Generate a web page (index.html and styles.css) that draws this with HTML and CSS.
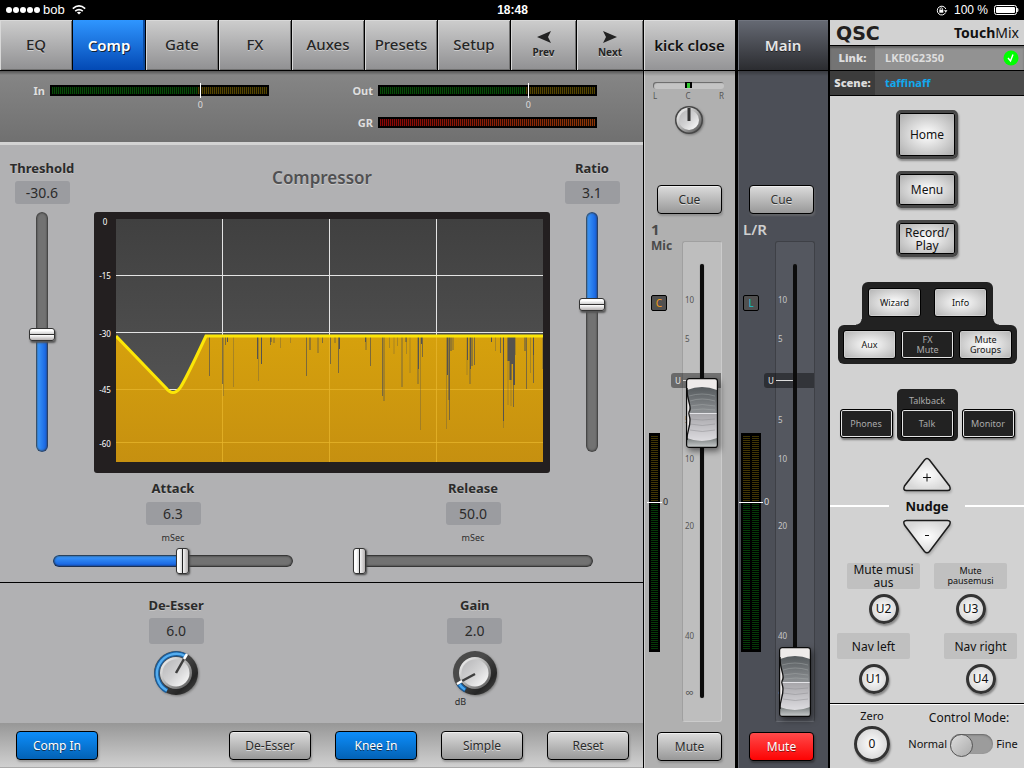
FILE: index.html
```html
<!DOCTYPE html>
<html lang="en">
<head>
<meta charset="utf-8">
<meta name="viewport" content="width=device-width, initial-scale=1">
<title>TouchMix Control</title>
<link rel="stylesheet" href="styles.css">
</head>
<body>
<svg class="defs" width="0" height="0" aria-hidden="true">
  <defs>
    <linearGradient id="metal" x1="0" y1="0" x2="1" y2="1"><stop offset="0" stop-color="#b5b5b7"/><stop offset=".5" stop-color="#d2d2d3"/><stop offset="1" stop-color="#fff"/></linearGradient>
    <linearGradient id="rim" x1="0" y1="0" x2="1" y2="1"><stop offset="0" stop-color="#fff"/><stop offset=".5" stop-color="#b0b0b0"/><stop offset="1" stop-color="#4a4a4a"/></linearGradient>
    <linearGradient id="ring" x1="0" y1="0" x2="1" y2="1"><stop offset=".4" stop-color="#4a4a4a"/><stop offset=".75" stop-color="#262626"/><stop offset="1" stop-color="#505050"/></linearGradient>
    <linearGradient id="plot" x1="0" y1="0" x2="0" y2="1"><stop offset="0" stop-color="#404040"/><stop offset="1" stop-color="#5a5a5a"/></linearGradient>
    <linearGradient id="amber" x1="0" y1="0" x2="0" y2="1"><stop offset="0" stop-color="#d6a10d"/><stop offset="1" stop-color="#c69010"/></linearGradient>
    <linearGradient id="capTop" x1="0" y1="0" x2="0" y2="1"><stop offset="0" stop-color="#555a5d"/><stop offset="1" stop-color="#8d9093"/></linearGradient>
    <linearGradient id="capLow" x1="0" y1="0" x2="0" y2="1"><stop offset="0" stop-color="#a5a4a8"/><stop offset="1" stop-color="#dddce0"/></linearGradient>
    <linearGradient id="capEnd" x1="0" y1="0" x2="0" y2="1"><stop offset="0" stop-color="#777c7d"/><stop offset="1" stop-color="#c6caca"/></linearGradient>
    <radialGradient id="tri"><stop offset="0" stop-color="#fff"/><stop offset="1" stop-color="#d8d8d8"/></radialGradient>
    <symbol id="cap" viewBox="0 0 32 70">
      <rect x=".5" y=".5" width="31" height="69" rx="2.5" fill="#eeebea"/>
      <path d="M1 12Q16 6 31 12V35H3Q5 30 3 25 1 20 1 12Z" fill="url(#capTop)"/>
      <path d="M3 35H31V60Q16 66 2 60V50Q5 41 3 35Z" fill="url(#capLow)"/>
      <path d="M1 60Q16 66 31 60V67Q31 69 29 69H3Q1 69 1 67Z" fill="url(#capEnd)"/>
      <path d="M3 18Q16 14 29 18M4 23Q16 19 29 23M4 28Q16 25 29 28M5 32Q17 30 29 32" fill="none" stroke="#aeb1b3" stroke-width=".7" opacity=".6"/>
      <path d="M4 41Q16 43 29 41M4 46Q16 49 29 46M4 52Q16 55 29 52" fill="none" stroke="#8d8c90" stroke-width=".7" opacity=".7"/>
      <path d="M3 35.500H31" stroke="#e4e4e8" stroke-width="1"/>
      <path d="M1 10C.5 24 7 29 3 34 2 36 4 38 4 42 4 51 1 52 1 62" fill="none" stroke="#111" stroke-width="1.3"/>
      <rect x=".6" y=".6" width="30.8" height="68.8" rx="2.5" fill="none" stroke="#0a0a0a" stroke-width="1.2"/>
    </symbol>
  </defs>
</svg>

<header class="status">
  <div class="status-left">
    <svg width="35" height="8" viewBox="0 0 35 8" fill="#fff" aria-hidden="true"><circle cx="3" cy="4" r="3"/><circle cx="10" cy="4" r="3"/><circle cx="17" cy="4" r="3"/><circle cx="24" cy="4" r="3"/><circle cx="31" cy="4" r="3"/></svg>
    <span>bob</span>
    <svg class="wifi" width="14" height="10" viewBox="0 0 14 10" fill="none" stroke="#fff" stroke-width="1.6" aria-hidden="true"><path d="M.8 3.6Q7-1.8 13.2 3.6M3.2 6.2Q7 3 10.8 6.2"/><path d="M7 9.6 4.9 7.6Q7 6 9.1 7.6Z" fill="#fff" stroke="none"/></svg>
  </div>
  <time class="clock">18:48</time>
  <div class="status-right">
    <svg width="12" height="11" viewBox="0 0 12 11" aria-hidden="true"><path d="M9.6 7.6A4.4 4.4 0 1 1 9.8 4" fill="none" stroke="#fff" stroke-width="1"/><path d="M7.9 5.2h3.6L9.8 7.4Z" fill="#fff"/><rect x="3.3" y="4.7" width="4" height="3" fill="#fff"/><path d="M4.1 4.8V4a1.2 1.2 0 0 1 2.4 0v.8" fill="none" stroke="#fff" stroke-width=".8"/></svg>
    <span>100 %</span>
    <svg width="25" height="10" viewBox="0 0 25 10" aria-hidden="true"><rect x=".5" y=".5" width="22" height="9" rx="2" fill="none" stroke="#fff"/><rect x="2" y="2" width="19" height="6" rx="1" fill="#fff"/><path d="M23.5 3Q25 5 23.5 7Z" fill="#fff" stroke="#fff" stroke-width=".6"/></svg>
  </div>
</header>

<div class="console">
  <main class="panel">
    <nav class="tabs">
      <button>EQ</button><button class="on" aria-current="page">Comp</button><button>Gate</button><button>FX</button><button>Auxes</button><button>Presets</button><button>Setup</button>
      <button class="step"><svg width="14" height="12" viewBox="0 0 14 12" aria-hidden="true"><path d="M14 0 0 6l14 6-3-6Z" fill="#222"/></svg>Prev</button>
      <button class="step"><svg width="14" height="12" viewBox="0 0 14 12" aria-hidden="true"><path d="M0 0 14 6 0 12 3 6Z" fill="#222"/></svg>Next</button>
    </nav>

    <section class="meters">
      <span class="meter-name">In</span>
      <div class="meter level"><i class="zero"></i><span class="zero-label">0</span></div>
      <span class="meter-name">Out</span>
      <div class="meter level"><i class="zero"></i><span class="zero-label">0</span></div>
      <span class="meter-name gr-name">GR</span>
      <div class="meter gr"></div>
    </section>

    <section class="dynamics">
      <div class="side-control">
        <label for="threshold">Threshold</label>
        <output class="value">-30.6</output>
        <input id="threshold" class="vslider low" type="range" min="0" max="100" value="49" style="--fill:49%">
      </div>
      <div class="graph">
        <h1>Compressor</h1>
        <div class="screen">
          <div class="axis"><span style="top:1%">0</span><span style="top:23%">-15</span><span style="top:47%">-30</span><span style="top:70%">-45</span><span style="top:92%">-60</span></div>
          <svg class="plot" viewBox="0 0 427 243" preserveAspectRatio="none" role="img" aria-label="Level history">
            <rect width="427" height="243" fill="url(#plot)"/>
            <path d="M0 56.5H427M0 113.5H427M0 170.5H427M106.500 0V243M213.500 0V243M320.500 0V243" stroke="#e4e4e4" fill="none"/>
            <path d="M0 117 51 170Q57 178 63 170 70 160 90 117H427V243H0Z" fill="url(#amber)"/>
            <path d="M0 170.500H51M63 170.500H427M0 223.500H427M106.500 118V243M213.500 118V243M320.500 118V243" stroke="#e7b52c" fill="none" opacity=".75"/>
            <g fill="none" stroke="#56534e">
              <path opacity=".35" d="M107.500 118V177M117.500 118V168M142.500 118V162M164.500 118V129M174.500 118V124M273.500 118V129M278 118V135M281.500 118V127M290.500 118V135M294 118V154M304.500 118V211M330.500 118V210M351 118V156M387.500 118V209M392 118V186M395 118V187M414.500 118V154M426.500 118V150M379.500 118V132"/>
              <path opacity=".7" d="M93.500 118V157M106.500 118V165M109.500 118V126M154.500 118V126M158 118V124M190.500 118V157M202 118V134M206.500 118V124M214.500 118V145M219 118V124M222.500 118V154M250 118V131M254.500 118V147M266.500 118V177M268 118V182M286 118V168M302 118V165M306.500 118V138M337 118V131M358.500 118V146M354 118V165M384.500 118V134M399 118V136M397.500 118V188M410.500 118V170M417.500 118V164M333.500 118V201"/>
              <path d="M111.500 118V123M141.500 118V140M145.500 118V145M155 118V123M194 118V131M223.500 118V130M249.500 118V123M290 118V123M302.500 118V150M305.500 118V125M331.500 118V156M333 118V181M335 118V132M351.500 118V141M354.500 118V150M356 118V147M375.500 118V123M387.500 118V202M409 118V132M417.500 118V136"/>
              <path d="M392.500 118V142M394.500 118V161M396 118V145M398 118V166" stroke-width="2"/>
            </g>
            <path d="M0 117 50 169Q57 178 64 169 70 160 90 117H427" fill="none" stroke="#fbe608" stroke-width="3"/>
          </svg>
        </div>
      </div>
      <div class="side-control">
        <label for="ratio">Ratio</label>
        <output class="value">3.1</output>
        <input id="ratio" class="vslider high" type="range" min="0" max="100" value="62" style="--fill:62%">
      </div>
    </section>

    <section class="timing">
      <div class="time-control">
        <label for="attack">Attack</label><output class="value">6.3</output><small>mSec</small>
        <input id="attack" class="hslider" type="range" min="0" max="100" value="54" style="--fill:54%">
      </div>
      <div class="time-control">
        <label for="release">Release</label><output class="value">50.0</output><small>mSec</small>
        <input id="release" class="hslider" type="range" min="0" max="100" value="0" style="--fill:0%">
      </div>
    </section>

    <section class="knobs">
      <div class="knob-control">
        <label for="deesser">De-Esser</label><output class="value tall">6.0</output>
        <div class="knob">
          <svg width="46" height="46" viewBox="-23 -23 46 46" aria-hidden="true">
            <circle r="22" fill="url(#ring)"/>
            <path d="M-9 17.700A19.500 19.500 0 0 1 10-16.700" fill="none" stroke="#1b5f9f" stroke-width="5"/><path d="M-9 17.700A19.500 19.500 0 0 1 10-16.700" fill="none" stroke="#55aef0" stroke-width="2.500"/>
            <circle r="16" fill="url(#rim)"/><circle r="13.500" fill="url(#metal)"/>
            <path d="M0 0 8-14" stroke="#3e3e3e" stroke-width="2.500"/><path d="M8-14 11-19" stroke="#fff" stroke-width="2.500"/>
          </svg>
          <input id="deesser" type="range" min="0" max="10" value="6">
        </div>
      </div>
      <div class="knob-control">
        <label for="gain">Gain</label><output class="value tall">2.0</output>
        <div class="knob">
          <svg width="46" height="46" viewBox="-23 -23 46 46" aria-hidden="true">
            <circle r="22" fill="url(#ring)"/>
            <path d="M-9.500 17A19.500 19.500 0 0 1-16 11" fill="none" stroke="#175c9c" stroke-width="5"/><path d="M-10 16.700A19.500 19.500 0 0 1-15.500 11.500" fill="none" stroke="#46a5ef" stroke-width="2.500"/>
            <circle r="16" fill="url(#rim)"/><circle r="13.500" fill="url(#metal)"/>
            <path d="M0 1-13 8" stroke="#3e3e3e" stroke-width="2.500"/><path d="M-13 8-18 11" stroke="#fff" stroke-width="2.500"/>
          </svg>
          <input id="gain" type="range" min="0" max="24" value="2">
        </div>
        <small class="unit">dB</small>
      </div>
    </section>

    <footer class="toolbar">
      <button class="btn blue first">Comp In</button><button class="btn">De-Esser</button><button class="btn blue">Knee In</button><button class="btn">Simple</button><button class="btn">Reset</button>
    </footer>
  </main>

  <section class="strip channel">
    <h2>kick close</h2>
    <div class="pan">
      <div class="pan-track"><i></i></div>
      <div class="pan-marks"><span>L</span><span>C</span><span>R</span></div>
      <div class="knob">
        <svg width="30" height="30" viewBox="-15 -15 30 30" aria-hidden="true"><circle r="14" fill="#464646"/><circle r="12.500" fill="url(#rim)"/><circle r="10" fill="url(#metal)"/><path d="M0 1V-12" stroke="#333" stroke-width="3"/></svg>
        <input type="range" aria-label="Pan" min="-50" max="50" value="0">
      </div>
    </div>
    <button class="btn cue">Cue</button>
    <div class="strip-body">
      <div class="strip-info">
        <span class="number">1</span><span class="name">Mic</span>
        <button class="badge amber">C</button>
        <div class="vmeter"><i class="zero"></i><span>0</span></div>
      </div>
      <div class="fader">
        <span style="top:12%">10</span><span style="top:20%">5</span><span style="top:37%">5</span><span style="top:45%">10</span><span style="top:59%">20</span><span style="top:82%">40</span><span class="inf" style="top:94%">∞</span>
        <div class="unity"><b>U</b></div><div class="slot"></div>
        <svg class="cap" width="32" height="70" style="top:36%" aria-hidden="true"><use href="#cap"/></svg>
        <input type="range" aria-label="Channel level" min="0" max="100" value="73">
      </div>
    </div>
    <button class="btn">Mute</button>
  </section>

  <section class="strip master">
    <h2>Main</h2>
    <div class="pan"></div>
    <button class="btn cue">Cue</button>
    <div class="strip-body">
      <div class="strip-info">
        <span class="number">L/R</span><span class="name">&nbsp;</span>
        <button class="badge teal">L</button>
        <div class="vmeter stereo"><i class="zero"></i><span>0</span></div>
      </div>
      <div class="fader">
        <span style="top:12%">10</span><span style="top:20%">5</span><span style="top:37%">5</span><span style="top:45%">10</span><span style="top:59%">20</span><span style="top:82%">40</span><span class="inf" style="top:94%">∞</span>
        <div class="unity"><b>U</b></div><div class="slot"></div>
        <svg class="cap" width="32" height="70" style="top:92%" aria-hidden="true"><use href="#cap"/></svg>
        <input type="range" aria-label="Main level" min="0" max="100" value="0">
      </div>
    </div>
    <button class="btn red">Mute</button>
  </section>

  <aside class="remote">
    <div class="brand"><span class="qsc">QSC</span><span class="product"><b>Touch</b>Mix</span></div>
    <div class="info link"><b>Link:</b><span>LKE0G2350</span>
      <svg width="16" height="16" viewBox="0 0 16 16" aria-label="Connected"><circle cx="8" cy="8" r="7.500" fill="#0f0"/><path d="M5 8 7.500 11 10 4.500" fill="none" stroke="#fff" stroke-width="1.400"/></svg></div>
    <div class="info scene"><b>Scene:</b><span>taffinaff</span></div>
    <div class="remote-body">
      <button class="hard home">Home</button>
      <button class="hard">Menu</button>
      <button class="hard">Record/<br>Play</button>

      <div class="pad">
        <div class="pad-top"><button class="key">Wizard</button><button class="key">Info</button></div>
        <div class="pad-low"><button class="key">Aux</button><button class="key dark">FX<br>Mute</button><button class="key">Mute<br>Groups</button></div>
      </div>

      <div class="talk-row">
        <button class="key dark cased">Phones</button>
        <div class="talk"><span>Talkback</span><button class="key dark">Talk</button></div>
        <button class="key dark cased">Monitor</button>
      </div>

      <div class="nudge">
        <button aria-label="Nudge up"><svg width="50" height="36" viewBox="0 0 50 36"><path d="M22.500 3Q25 0 27.500 3L47.500 29Q49.500 33.500 45.500 33.500H4.500Q.5 33.500 2.500 29Z" fill="url(#tri)" stroke="#1c1c1c" stroke-width="1.500"/><path d="M21 20.500h8M25 16.500v8" stroke="#111"/></svg></button>
        <div class="nudge-title">Nudge</div>
        <button aria-label="Nudge down"><svg width="50" height="36" viewBox="0 0 50 36"><path d="M22.500 32.500Q25 35 27.500 32.500L47.500 6Q49.500 1.500 45.500 1.500H4.500Q.5 1.500 2.500 6Z" fill="url(#tri)" stroke="#1c1c1c" stroke-width="1.500"/><path d="M23 16.500h4" stroke="#111"/></svg></button>
      </div>

      <div class="users near">
        <div><span class="tag">Mute musi<br>aus</span><button class="round">U2</button></div>
        <div><span class="tag small">Mute<br>pausemusi</span><button class="round">U3</button></div>
      </div>
      <div class="users far">
        <div><span class="tag">Nav left</span><button class="round">U1</button></div>
        <div><span class="tag">Nav right</span><button class="round">U4</button></div>
      </div>
    </div>
    <div class="mode">
      <div class="zero-box"><label for="zero">Zero</label><button id="zero" class="round large">0</button></div>
      <div class="mode-box">
        <span class="mode-title">Control Mode:</span>
        <label class="switch">Normal<input type="checkbox" role="switch">Fine</label>
      </div>
    </div>
  </aside>
</div>
</body>
</html>
```
FILE: styles.css
```css
* { box-sizing: border-box; }
body {
  margin: 0;
  min-height: 100vh;
  display: flex;
  flex-direction: column;
  background: #000;
  color: #2b2b2b;
  font-family: "Noto Sans", "Open Sans", sans-serif;
  font-size: 13px;
  line-height: 16px;
}
button, input { font: inherit; color: inherit; margin: 0; padding: 0; border: 0; background: none; }
h1, h2 { margin: 0; }
small { font-size: 9px; line-height: 12px; }
.defs { position: absolute; }

.status {
  height: 20px;
  display: grid;
  grid-template-columns: 1fr auto 1fr;
  align-items: center;
  padding: 0 5px 0 6px;
  color: #fff;
  font-family: "Liberation Sans", sans-serif;
  font-size: 12px;
}
.status-left, .status-right { display: flex; align-items: center; gap: 2px; }
.status-left { font-size: 13px; }
.wifi { margin-left: 5px; }
.status-right { justify-content: flex-end; gap: 6px; }
.clock { font-weight: 700; }

.console { flex: 1; display: grid; grid-template-columns: minmax(0, 1fr) 95px 90px 196px; }
.panel { display: flex; flex-direction: column; background: #b1b1b3; }

.tabs { display: grid; grid-template-columns: repeat(7, 73fr) 66fr 66fr; height: 51px; border-bottom: 1px solid #000; }
.tabs button {
  border-right: 1px solid #000;
  background: linear-gradient(#cdcdcd, #909092);
  box-shadow: inset 1px 1px #d8d8d8, inset -1px -1px #707070;
  padding-bottom: 2px;
  color: #252525;
  font-size: 15px;
  font-weight: 500;
  text-shadow: 0 1px #d0d0d0;
}
.tabs .on { background: linear-gradient(#2f96ff, #0349b4); box-shadow: inset -2px 0 #0b4a9f; padding-bottom: 0; color: #fff; font-weight: 600; text-shadow: 1px 1px #123; }
.tabs .step { display: flex; flex-direction: column; align-items: center; justify-content: center; gap: 2px; padding-bottom: 0; font-size: 10px; line-height: 14px; font-weight: 700; }
.tabs .step:last-child { border-right: 0; }

.meters {
  display: grid;
  grid-template-columns: 45px 1fr 99px 1fr;
  grid-auto-rows: 32px;
  column-gap: 5px;
  height: 74px;
  padding: 14px 46px 0 0;
  background: linear-gradient(#555 0, #858585 4px, #707070);
  border-bottom: 3px solid #d3d3d3;
}
.meter-name { color: #dedede; font-size: 11px; font-weight: 700; line-height: 11px; text-align: right; text-shadow: 1px 1px #777; }
.gr-name { grid-column: 3; }
.meter { position: relative; height: 11px; border: 2px solid #000; }
.level { background: linear-gradient(90deg, transparent 50%, #000b 50%) 0 0 / 2px 100%, linear-gradient(90deg, #064b06 68%, #544500 68%); }
.gr { background: linear-gradient(90deg, transparent 50%, #000b 50%) 0 0 / 2px 100%, linear-gradient(90deg, #8c0606, #8c3606); }
.meter .zero { position: absolute; left: 69%; top: -4px; width: 1px; height: 15px; background: #fff; }
.zero-label { position: absolute; left: 69%; top: 12px; translate: -50% 0; color: #ddd; font-size: 9px; line-height: 12px; }

.dynamics { display: grid; grid-template-columns: 84px 1fr 84px; padding: 15px 9px 0 0; flex: 1; }
.side-control { display: flex; flex-direction: column; align-items: center; }
.side-control label, .time-control label, .knob-control label { font-size: 13px; font-weight: 700; line-height: 16px; text-shadow: 0 1px #c4c4c4; }
.value { width: 55px; height: 23px; border-radius: 3px; background: #9b9ca0; font-size: 14px; line-height: 23px; text-align: center; }
.value.tall { height: 26px; line-height: 26px; }
.side-control .value { margin: 5px 0 8px; }

input[type=range] { -webkit-appearance: none; appearance: none; cursor: pointer; }
.vslider { flex: 1; width: 26px; writing-mode: vertical-lr; direction: rtl; }
.vslider::-webkit-slider-runnable-track { width: 12px; height: 100%; margin: 0 7px; border-radius: 6px; box-shadow: inset 0 0 2px 1px #383838; }
.low::-webkit-slider-runnable-track { background: linear-gradient(to top, transparent var(--fill), #727272 0), linear-gradient(90deg, #41a1ff, #1059dc); }
.high::-webkit-slider-runnable-track { background: linear-gradient(to top, #727272 var(--fill), transparent 0), linear-gradient(90deg, #41a1ff, #1059dc); }
.vslider::-webkit-slider-thumb {
  -webkit-appearance: none;
  width: 26px;
  height: 13px;
  margin-left: -7px;
  border: 1px solid #333;
  border-radius: 3px;
  background: linear-gradient(#fff 0 15%, #cfcfcf 45%, #333 45% 56%, #fff 56%, #b5b1b1);
  box-shadow: 1px 2px 2px #555;
}

.graph { display: flex; flex-direction: column; margin-left: 10px; }
.graph h1 { height: 52px; padding: 8px 0; text-align: center; color: #505052; font-size: 17px; font-weight: 600; line-height: 20px; text-shadow: 0 1px #ccc; }
.screen { flex: 1; display: grid; grid-template-columns: 22px 1fr; padding: 7px 7px 11px 0; border-radius: 3px; background: #231f20; margin-bottom: -21px; }
.axis { position: relative; color: #fff; font-size: 8px; line-height: 10px; text-align: center; }
.axis span { position: absolute; left: 0; right: 0; translate: 0 -4px; }
.plot { width: 100%; height: 100%; min-height: 200px; display: block; }

.timing { display: grid; grid-template-columns: 1fr 1fr; column-gap: 60px; padding: 28px 50px 8px 53px; border-bottom: 1px solid #000; }
.time-control { display: flex; flex-direction: column; align-items: center; }
.time-control .value { margin: 6px 0 7px; }
.hslider { width: 100%; height: 26px; margin-top: 4px; }
.hslider::-webkit-slider-runnable-track {
  height: 12px;
  border-radius: 6px;
  background: linear-gradient(90deg, transparent var(--fill), #727272 0), linear-gradient(#41a1ff, #1059dc);
  box-shadow: inset 0 0 2px 1px #222;
}
.hslider::-webkit-slider-thumb {
  -webkit-appearance: none;
  width: 13px;
  height: 26px;
  margin-top: -7px;
  border: 1px solid #333;
  border-radius: 3px;
  background: linear-gradient(90deg, #fff 0 20%, #ddd 42%, #222 42% 54%, #f3f3f3 54%, #b5b1b1);
  box-shadow: 1px 1px 2px #444;
}

.knobs { display: grid; grid-template-columns: 299fr 299fr; padding: 14px 19px 0 27px; height: 140px; }
.knob-control { display: flex; flex-direction: column; align-items: center; }
.knob-control .value { margin: 5px 0 6px; }
.knob { position: relative; width: max-content; }
.knob svg { display: block; filter: drop-shadow(1px 1px 1px #777); }
.knob input { position: absolute; inset: 0; width: 100%; opacity: 0; }
.unit { width: 40px; }

.toolbar { display: flex; gap: 24px; height: 46px; padding: 8px 14px 0 16px; background: linear-gradient(#979797, #d0d0d0); border-bottom: 2px solid #aaa; }
.first { margin-right: auto; }
.btn {
  width: 82px;
  height: 29px;
  border: 1px solid #000;
  border-radius: 4px;
  background: linear-gradient(#dcdcdc, #989898);
  box-shadow: inset 0 1px #eee, 1px 2px 2px #7778;
  font-size: 12px;
  text-shadow: 0 1px #ddd;
}
.blue { background: linear-gradient(#0d8dfa, #0362b5); box-shadow: 1px 2px 2px #7778; color: #fff; text-shadow: 0 1px #135; }
.red { background: linear-gradient(#ff4a4a, #fd0303); box-shadow: 1px 2px 2px #2228; color: #fff; text-shadow: 0 1px #811; }

.strip { display: flex; flex-direction: column; background: #b0b0b0; box-shadow: inset 1px 0 #d0d0d0; }
.channel { margin: 0 3px 0 1px; }
.strip h2 { height: 51px; border-bottom: 1px solid #000; background: linear-gradient(#cecece, #949496); box-shadow: inset 1px 1px #ddd; color: #111; font-size: 15px; font-weight: 600; line-height: 50px; text-align: center; white-space: nowrap; text-shadow: 0 1px #ccc; }
.master { background: #4c4f57; color: #ddd; box-shadow: inset 1px 0 #6b6e76; }
.master h2 { background: linear-gradient(#666a74, #2b2c30); box-shadow: inset 1px 1px #727680; color: #e6e6e6; text-shadow: 0 1px #222; }
.strip > .btn { width: auto; margin: 0 13px 8px; flex: none; }
.master > .btn { margin: 0 14px 8px 11px; }
.strip > .cue { margin-bottom: 4px; }
.master .cue { color: #333; }
.pan { height: 114px; padding: 11px 11px 0 9px; display: flex; flex-direction: column; background: linear-gradient(#0004, #0000 5px); }
.pan-track { height: 7px; border-radius: 3px; background: #c4c4c4; box-shadow: inset 1px 1px 1px #666; display: flex; justify-content: center; }
.pan-track i { width: 7px; height: 6px; border: 1px solid #000; border-width: 1px 2px 0; background: #3c3; }
.pan-marks { display: flex; justify-content: space-between; color: #555; font-size: 8px; line-height: 14px; }
.pan .knob { align-self: center; margin-top: 2px; }
.strip-body { flex: 1; display: flex; justify-content: space-between; padding-right: 13px; }
.strip-info { display: flex; flex-direction: column; padding: 2px 0 80px 5px; width: 38px; }
.master .strip-info { width: 36px; padding-left: 3px; }
.number, .name { padding-left: 2px; color: #4a4a4a; font-weight: 700; white-space: nowrap; }
.number { font-size: 15px; line-height: 18px; }
.name { font-size: 12px; line-height: 15px; }
.master .number { color: #cfcfcf; font-weight: 600; }
.badge { flex: none; width: 16px; height: 16px; margin: 42px 0 122px 2px; border: 1px solid #000; border-radius: 2px; background: #505050; font-size: 10px; line-height: 14px; }
.amber { color: #f59c1b; }
.teal { color: #19c3cf; }
.vmeter { position: relative; flex: 1; width: 11px; border: 2px solid #000; background: linear-gradient(#000 50%, transparent 50%) 0 0 / 100% 2px, linear-gradient(#403505 31%, #063a08 31%); }
.stereo { width: 20px; background: linear-gradient(90deg, transparent 7px, #000 7px 9px, transparent 9px), linear-gradient(#000 50%, transparent 50%) 0 0 / 100% 2px, linear-gradient(#403505 31%, #063a08 31%); }
.vmeter .zero { position: absolute; top: 31%; left: -4px; right: -4px; height: 1px; background: #fff; }
.vmeter span { position: absolute; top: 31%; left: 100%; margin-left: 5px; translate: 0 -6px; font-size: 9px; line-height: 12px; }
.fader { position: relative; width: 40px; margin: 23px 0 10px; border: 1px solid #a0a0a0; border-right-color: #ccc; border-bottom-color: #ccc; border-radius: 3px; background: #bebebe; color: #555; font-size: 8px; line-height: 10px; }
.master .fader { border-color: #3e4046 #3e4046 #6a6d74; background: #54575f; color: #c8c8c8; }
.fader span { position: absolute; left: 2px; translate: 0 -4px; }
.fader .inf { font-size: 12px; }
.slot { position: absolute; left: 17px; top: 22px; bottom: 23px; width: 4px; border-radius: 2px; background: #0c0c0c; box-shadow: 0 0 1px #555; }
.unity { position: absolute; left: -12px; right: 0; top: 27%; height: 15px; margin-top: 2px; border-radius: 3px 0 0 3px; background: #0006; color: #ddd; padding-left: 4px; line-height: 15px; }
.unity::after { content: ""; position: absolute; left: 12px; width: 19px; top: 7px; height: 1px; background: #ddd; }
.unity b { font-weight: 500; }
.cap { position: absolute; left: 3px; margin-top: -1px; translate: 0 -50%; filter: drop-shadow(2px 3px 3px #0008); }
.fader input { position: absolute; inset: 0; width: 100%; height: 100%; opacity: 0; writing-mode: vertical-lr; direction: rtl; }

.remote { display: flex; flex-direction: column; margin-left: 2px; background: #d2d2d2; color: #111; }
.brand { height: 26px; display: flex; align-items: center; justify-content: space-between; padding: 0 5px 0 6px; border-bottom: 1px solid #000; }
.qsc { color: #231f20; font-family: "DejaVu Sans", sans-serif; font-size: 19px; font-weight: 700; }
.product { font-size: 14px; }
.info { height: 25px; display: grid; grid-template-columns: 45px 1fr auto; align-items: center; padding-right: 5px; border-bottom: 1px solid #000; color: #ddd; font-size: 11px; font-weight: 700; }
.info b { align-self: stretch; line-height: 24px; text-align: center; background: #0003; }
.info span { padding-left: 10px; }
.link { background: #929292; box-shadow: inset 0 2px 2px #666; }
.scene { background: #4c4c4c; }
.scene span { color: #12a9ef; }
.remote-body { flex: 1; display: flex; flex-direction: column; align-items: center; padding-top: 14px; }
.hard {
  width: 62px;
  height: 37px;
  margin-bottom: 12px;
  border: 3px solid #484848;
  border-radius: 5px;
  background: radial-gradient(#fff, #aaa);
  box-shadow: inset 0 0 0 1px #000, 1px 2px 2px #888;
  font-size: 12px;
  line-height: 13px;
}
.home { height: 49px; }
.pad { margin: 13px 0 0 1px; display: flex; flex-direction: column; align-items: center; }
.pad-top, .pad-low { display: flex; background: #222; border-radius: 6px; }
.pad-top { position: relative; gap: 13px; padding: 6px 6px 8px; border-radius: 6px 6px 0 0; }
.pad-low { gap: 5px; padding: 5px; }
.pad-top::before, .pad-top::after { content: ""; position: absolute; bottom: 0; width: 6px; height: 6px; }
.pad-top::before { left: -6px; background: radial-gradient(circle at 0 0, transparent 5px, #222 6px); }
.pad-top::after { right: -6px; background: radial-gradient(circle at 100% 0, transparent 5px, #222 6px); }
.key {
  width: 53px;
  height: 29px;
  border: 1px solid #000;
  border-radius: 3px;
  background: radial-gradient(#fff, #b2b2b2);
  box-shadow: inset 0 0 0 1px #ddd8;
  font-size: 9px;
  line-height: 10px;
}
.dark { background: #222; color: #aaa; box-shadow: inset 0 0 0 1px #e5e5e5; }
.cased { box-shadow: inset 0 0 0 1px #e5e5e5, 1px 2px 2px #777; }
.talk-row { display: flex; align-items: flex-end; gap: 4px; margin-top: 25px; }
.cased { margin-bottom: 3px; }
.talk { display: flex; flex-direction: column; align-items: center; padding: 6px 4px 3px; border-radius: 5px; background: #222; color: #aaa; font-size: 9px; line-height: 12px; gap: 2px; }
.nudge { align-self: stretch; display: flex; flex-direction: column; align-items: center; margin-top: 16px; }
.nudge button, .nudge svg { display: block; }
.nudge svg { filter: drop-shadow(1px 2px 1px #8888); }
.nudge-title { align-self: stretch; display: flex; align-items: center; gap: 16px; font-size: 13px; font-weight: 700; line-height: 20px; margin: 3px 0; }
.nudge-title::before, .nudge-title::after { content: ""; flex: 1; height: 2px; background: #fff; }
.users { display: flex; margin-top: 8px; }
.near { gap: 14px; }
.far { gap: 34px; margin-top: 9px; }
.users div { display: flex; flex-direction: column; align-items: center; gap: 5px; }
.tag { width: 73px; height: 26px; display: flex; align-items: center; justify-content: center; text-align: center; border-radius: 2px; background: #c0c0c0; font-size: 12px; line-height: 13px; }
.tag.small { font-size: 9px; line-height: 10px; }
.round { width: 30px; height: 30px; border: 3px solid #333; border-radius: 50%; background: radial-gradient(#fff, #ccc); box-shadow: 1px 2px 2px #888; font-size: 12px; line-height: 14px; }
.round.large { width: 36px; height: 36px; }
.mode { display: grid; grid-template-columns: 84px 1fr; height: 66px; padding-top: 4px; border-top: 1px solid #000; box-shadow: inset 0 1px #fff; }
.zero-box { display: flex; flex-direction: column; align-items: center; gap: 2px; font-size: 11px; }
.mode-box { display: flex; flex-direction: column; align-items: center; gap: 8px; padding-top: 2px; white-space: nowrap; }
.mode-title { font-size: 12px; }
.switch { display: flex; align-items: center; gap: 3px; margin-left: -12px; font-size: 11px; }
.switch input { -webkit-appearance: none; appearance: none; width: 43px; height: 20px; border-radius: 10px; background: #9c9c9c; box-shadow: inset 0 1px 2px #666; }
.switch input::before { content: ""; display: block; width: 21px; height: 21px; border: 1px solid #555; border-radius: 50%; background: linear-gradient(135deg, #ddd, #aaa); }
.switch input:checked::before { margin-left: auto; }
```
